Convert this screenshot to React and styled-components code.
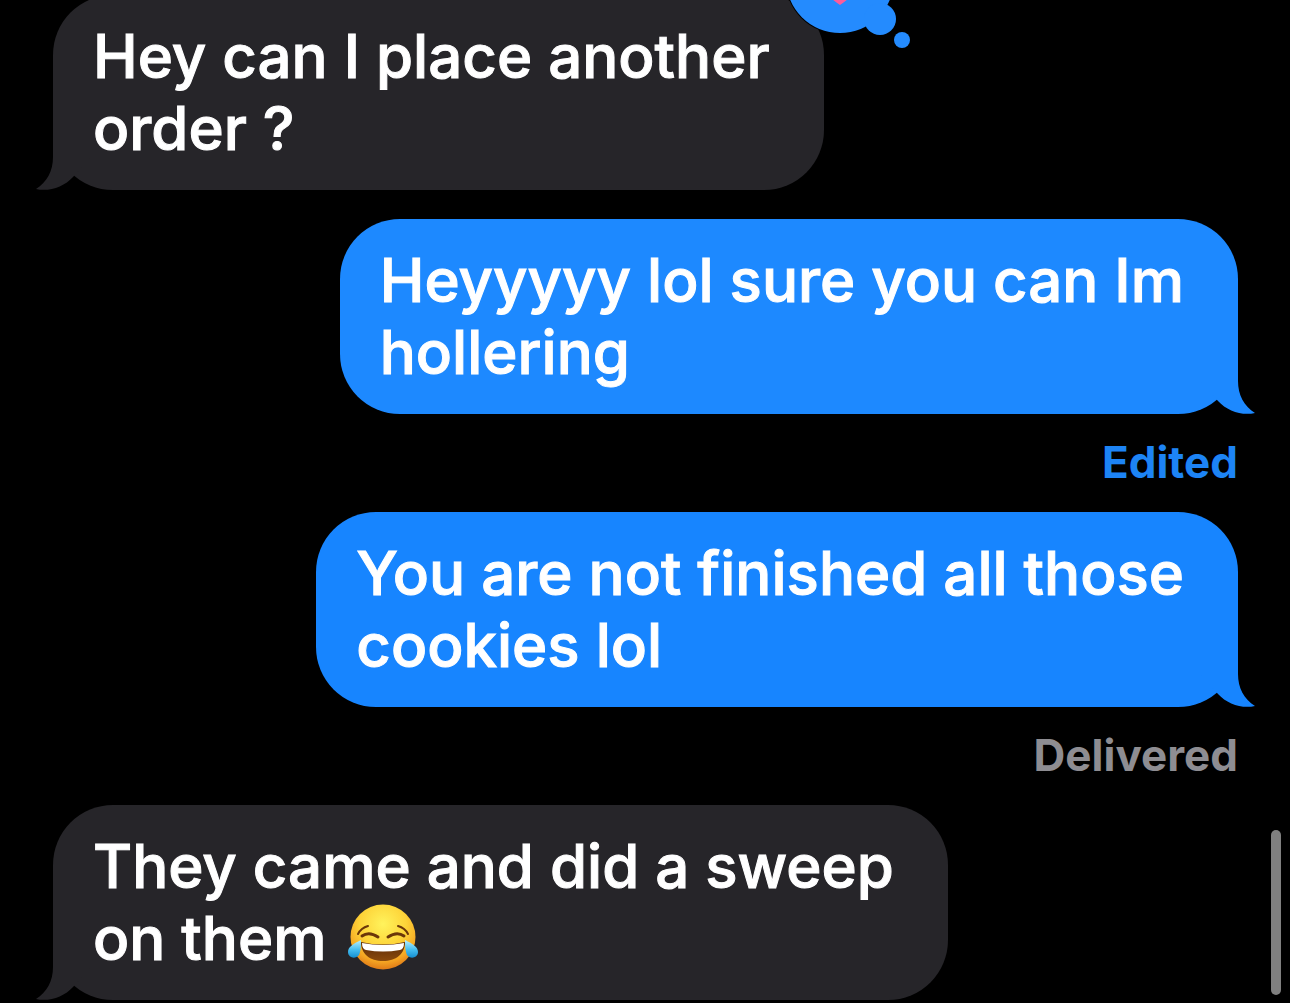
import React from "react";
import styled, { createGlobalStyle } from "styled-components";

const GlobalStyle = createGlobalStyle`
  * { box-sizing: border-box; }
  body {
    margin: 0;
    background: #000;
    font-family: Inter, "Liberation Sans", sans-serif;
  }
`;

const Screen = styled.main`
  position: relative;
  min-height: 100vh;
  overflow: hidden;
  background: #000;
`;

const Thread = styled.div`
  display: flex;
  flex-direction: column;
  gap: 29px;
  margin-top: -5px;
  padding: 0 52px 4px 53px;
`;

const Message = styled.article`
  display: flex;
  flex-direction: column;
  align-items: ${(p) => (p.$sent ? "flex-end" : "flex-start")};
`;

const Bubble = styled.div`
  position: relative;
  padding: 25px 54px 26px 40px;
  border-radius: 60px;
  background: ${(p) => p.$color};
`;

const Text = styled.p`
  margin: 0;
  color: #fff;
  font-size: 60px;
  font-weight: 500;
  line-height: 72px;
  white-space: nowrap;
  -webkit-text-stroke: 1px #fff;
`;

const TailSvg = styled.svg`
  position: absolute;
  bottom: 0;
  ${(p) => (p.$sent ? "right: -17px; transform: scaleX(-1);" : "left: -17px;")}
  fill: ${(p) => p.$color};
`;

const Status = styled.div`
  padding-top: 23px;
  color: ${(p) => p.$color};
  font-size: 44px;
  font-weight: 700;
  line-height: 50px;
  margin-bottom: -4px;
`;

const ReactionSvg = styled.svg`
  position: absolute;
  top: -71px;
  right: -88px;
`;

const EmojiSvg = styled.svg`
  width: 70px;
  height: 66px;
  margin-left: 6px;
  vertical-align: -10px;
`;

const ScrollThumb = styled.div`
  position: absolute;
  right: 9px;
  bottom: 9px;
  width: 10px;
  height: 165px;
  border-radius: 5px;
  background: #808080;
`;

function Tail({ sent, color }) {
  return (
    <TailSvg $sent={sent} $color={color} width="60" height="62" aria-hidden="true">
      <path d="M17 0V29C17 43 11 54 0 61C13 64 28 59 37 49L54 30V0Z" />
    </TailSvg>
  );
}

function HeartReaction() {
  return (
    <ReactionSvg width="126" height="126" role="img" aria-label="Heart reaction">
      <circle cx="54" cy="55" r="55" fill="#000" />
      <g fill="#248bfe">
        <circle cx="54" cy="55" r="54" />
        <circle cx="94" cy="95" r="16" />
        <circle cx="116" cy="116" r="8" />
      </g>
      <path
        d="M54 81C45 75 28 61 28 45C28 29 47 26 54 40C61 26 80 29 80 45C80 61 63 75 54 81Z"
        fill="#fb5c9b"
      />
    </ReactionSvg>
  );
}

function JoyEmoji() {
  return (
    <EmojiSvg viewBox="0 0 70 66" role="img" aria-label="Face with tears of joy">
      <defs>
        <radialGradient id="face" cx="50%" cy="30%" r="72%">
          <stop offset="0" stopColor="#fff35c" />
          <stop offset="0.5" stopColor="#fdd338" />
          <stop offset="0.8" stopColor="#f5a623" />
          <stop offset="1" stopColor="#dc7416" />
        </radialGradient>
        <linearGradient id="mouth" x1="0" y1="0" x2="0" y2="1">
          <stop offset="0" stopColor="#5a2a08" />
          <stop offset="1" stopColor="#8b4a0c" />
        </linearGradient>
        <linearGradient id="tear" x1="0" y1="0" x2="0" y2="1">
          <stop offset="0" stopColor="#b9f0ff" />
          <stop offset="0.55" stopColor="#45bdf0" />
          <stop offset="1" stopColor="#158fd0" />
        </linearGradient>
      </defs>
      <circle cx="35" cy="33" r="32.5" fill="url(#face)" />
      <g fill="none" stroke="#6b3609" strokeLinecap="round">
        <path d="M10 30Q13 24 20 22" strokeWidth="2" />
        <path d="M60 30Q57 24 50 22" strokeWidth="2" />
        <path d="M14 32Q21 27 30 33" strokeWidth="3" />
        <path d="M56 32Q49 27 40 33" strokeWidth="3" />
      </g>
      <path d="M13 38Q35 43 57 38C57 50 48 57 35 57C22 57 13 50 13 38Z" fill="url(#mouth)" />
      <path d="M14 39Q35 43 56 39Q56 45 52 46Q35 49 18 46Q14 45 14 39Z" fill="#fff" />
      <path d="M13 36C5 40 0 43 0 48C0 55 11 56 12 48C13 44 13 41 13 36Z" fill="url(#tear)" />
      <path d="M57 36C65 40 70 43 70 48C70 55 59 56 58 48C57 44 57 41 57 36Z" fill="url(#tear)" />
    </EmojiSvg>
  );
}

const messages = [
  { lines: ["Hey can I place another", "order ?"], color: "#262529", reaction: true },
  {
    lines: ["Heyyyyy lol sure you can Im", "hollering"],
    sent: true,
    color: "#1d89ff",
    status: "Edited",
    statusColor: "#1d84f5",
  },
  {
    lines: ["You are not finished all those", "cookies lol"],
    sent: true,
    color: "#1785ff",
    status: "Delivered",
    statusColor: "#8e8d92",
  },
  { lines: ["They came and did a sweep", "on them "], color: "#262529", emoji: true },
];

export default function App() {
  return (
    <Screen>
      <GlobalStyle />
      <Thread>
        {messages.map((m) => (
          <Message key={m.lines[0]} $sent={m.sent}>
            <Bubble $color={m.color}>
              <Tail sent={m.sent} color={m.color} />
              <Text>
                {m.lines[0]}
                <br />
                {m.lines[1]}
                {m.emoji && <JoyEmoji />}
              </Text>
              {m.reaction && <HeartReaction />}
            </Bubble>
            {m.status && <Status $color={m.statusColor}>{m.status}</Status>}
          </Message>
        ))}
      </Thread>
      <ScrollThumb />
    </Screen>
  );
}
